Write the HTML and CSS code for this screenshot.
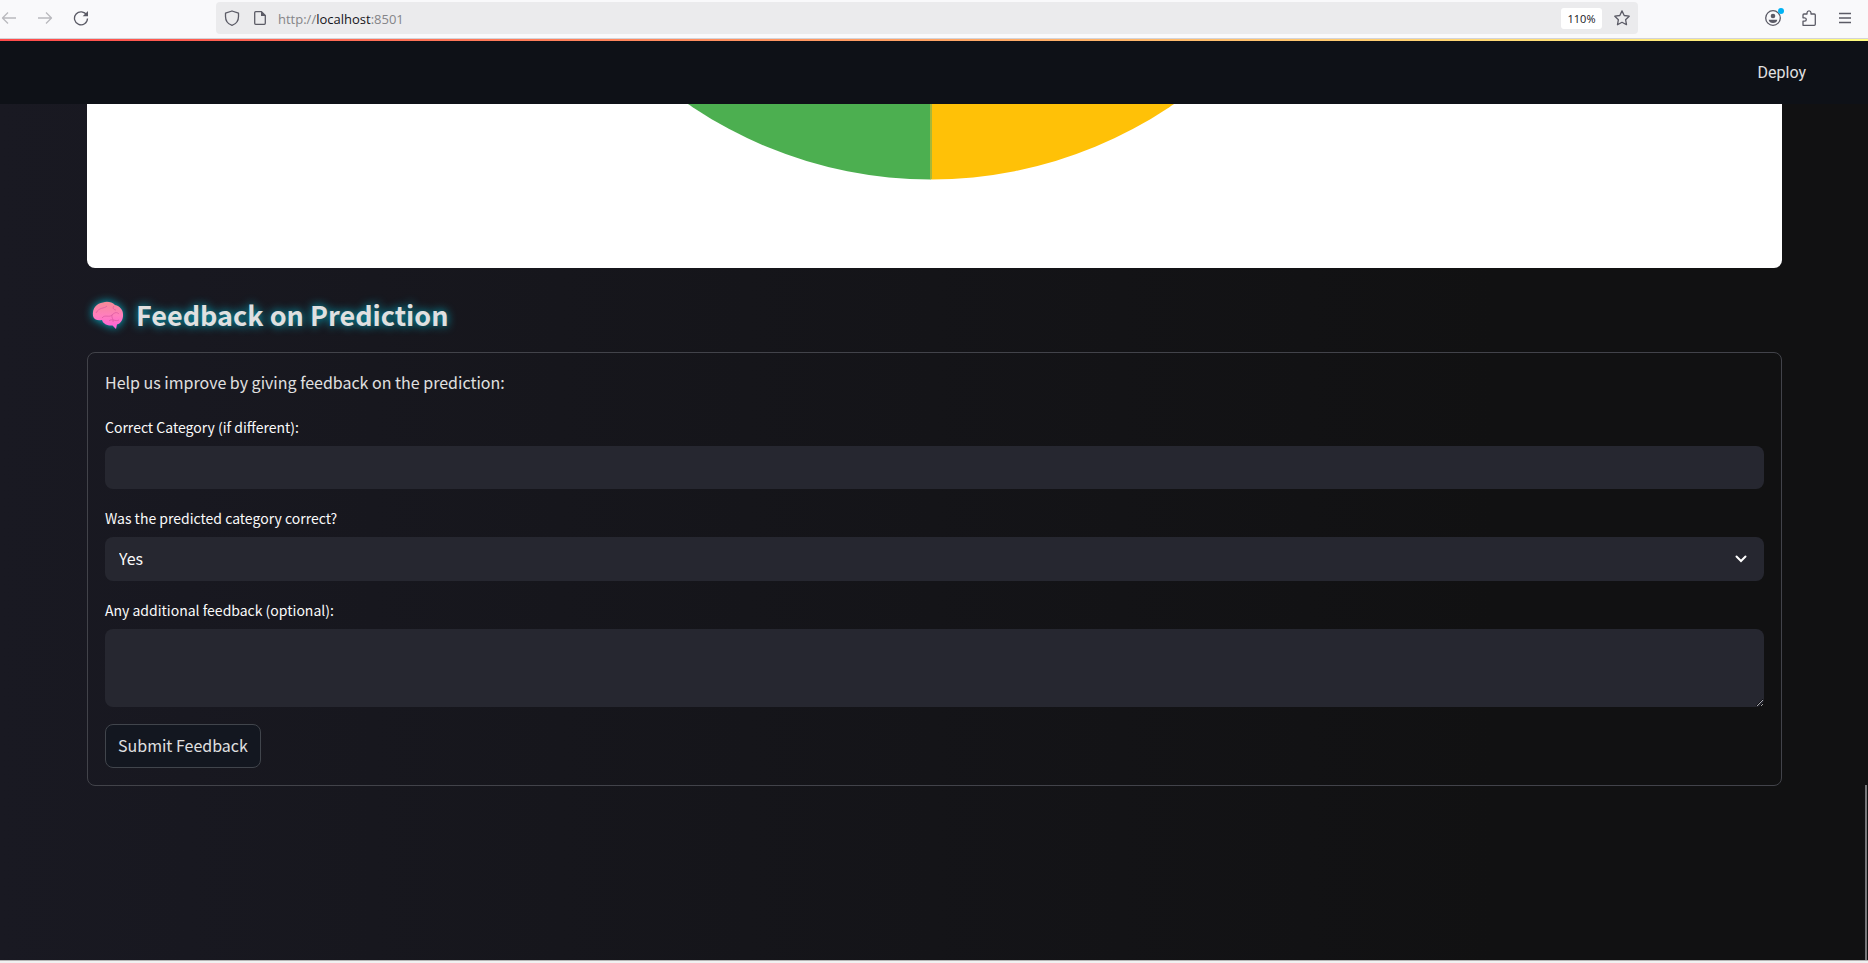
FILE: index.html
```html
<!DOCTYPE html>
<html lang="en">
<head>
<meta charset="utf-8">
<title>Feedback on Prediction</title>
<link rel="stylesheet" href="styles.css">
</head>
<body>
<div class="toolbar">
  <div class="nav">
    <button class="tool dim" aria-label="Back"><svg viewBox="0 0 16 16"><path d="M15 8H1.500M7 2.500L1.500 8 7 13.500"/></svg></button>
    <button class="tool dim" aria-label="Forward"><svg viewBox="0 0 16 16"><path d="M1 8H14.500M9 2.500L14.500 8 9 13.500"/></svg></button>
    <button class="tool" aria-label="Reload"><svg viewBox="0 0 16 16"><path d="M13.700 5.200A6.500 6.500 0 1 0 14.500 8.500"/><path class="solid" d="M15 1v5.300H9.700z"/></svg></button>
  </div>
  <div class="address">
    <svg class="icon" viewBox="0 0 16 16"><path d="M8 1L14.500 3.200V6.500C14.500 10.500 12 14 8 15.300C4 14 1.500 10.500 1.500 6.500V3.200Z"/></svg>
    <svg class="icon page" viewBox="0 0 16 16"><path d="M3.700 1.700H9.500L13.300 5.500V13.300Q13.300 14.300 12.300 14.300H3.700Q2.700 14.300 2.700 13.300V2.700Q2.700 1.700 3.700 1.700Z"/><path class="solid" d="M9 1.200V6h4.800z"/></svg>
    <span class="url">http://<span class="host">localhost</span>:8501</span>
    <button class="zoom">110%</button>
    <button class="tool" aria-label="Bookmark"><svg viewBox="0 0 16 16"><path d="M8 .9l2.200 4.600 5 .7-3.600 3.500.9 5L8 12.300l-4.500 2.400.9-5L.8 6.200l5-.7z"/></svg></button>
  </div>
  <div class="actions">
    <button class="tool account" aria-label="Account"><svg viewBox="0 0 16 16"><circle cx="8" cy="8" r="7.300"/><circle class="solid" cx="8" cy="6" r="2.300"/><path class="solid" d="M3.700 9.700h8.600q-.6 3.300-4.300 3.300t-4.300-3.300z"/></svg><span class="dot"></span></button>
    <button class="tool" aria-label="Extensions"><svg viewBox="0 0 16 16"><path d="M2 15.300V11.200h1.600q1.700-.1 1.700-1.700T3.600 7.800H2V5q0-1 1-1h3V2.800Q6.200.8 8 .8t2 2V4h3.300q1 0 1 1v9.300q0 1-1 1z"/></svg></button>
    <button class="tool" aria-label="Menu"><svg viewBox="0 0 16 16"><path d="M2 3.500h12M2 8h12M2 12.500h12"/></svg></button>
  </div>
</div>
<header class="app-header">
  <button class="deploy">Deploy</button>
</header>
<main class="content">
  <div class="chart">
    <svg viewBox="0 0 1695 164" preserveAspectRatio="xMidYMin meet" role="img" aria-label="Pie chart">
      <path fill="#4caf50" d="M844 -353.500V75.500A429 429 0 0 1 415 -353.500Z"/>
      <path fill="#ffc107" d="M844 -353.500V75.500A429 429 0 0 0 1273 -353.500Z"/>
      <path class="seam" d="M844 0V75"/>
    </svg>
  </div>
  <h2 class="title">
    <svg class="brain" viewBox="0 0 32 30">
      <defs><linearGradient id="pink" x1="0" y1="0" x2="0" y2="1"><stop offset="0" stop-color="#f58a96"/><stop offset=".5" stop-color="#ff7fbd"/><stop offset="1" stop-color="#ff5edb"/></linearGradient></defs>
      <path fill="url(#pink)" d="M1 16C0 8 5 3 11 2.500C15 1 20 2 23 5C28 6 31 10 31 14C31.500 19 29 23.500 25 24.500C24.500 26 24.500 27.500 24 29L20.500 25.500C16 26 11 24 10 20C6 21 2 20 1 16Z"/>
      <path class="fold" d="M4 13C7 7 12 9 15 6M10 18c3-4 7 0 10-3s5-3 7-1M17 21c3-3 6 1 10-1M22 6c-2 2 0 4 2 4M20 15c-1 3 2 4 1 7"/>
    </svg>
    <span>Feedback on Prediction</span>
  </h2>
  <form class="feedback" onsubmit="return false">
    <p class="intro">Help us improve by giving feedback on the prediction:</p>
    <div class="field">
      <label for="category">Correct Category (if different):</label>
      <input class="control" id="category" type="text">
    </div>
    <div class="field">
      <label for="correct">Was the predicted category correct?</label>
      <div class="select">
        <select class="control" id="correct"><option>Yes</option><option>No</option></select>
        <svg class="chevron" viewBox="0 0 12 8"><path d="M1.500 1.500L6 6l4.500-4.500"/></svg>
      </div>
    </div>
    <div class="field">
      <label for="extra">Any additional feedback (optional):</label>
      <textarea class="control area" id="extra"></textarea>
    </div>
    <button class="submit" type="submit">Submit Feedback</button>
  </form>
</main>
<div class="scroll-thumb"></div>
<div class="bottom-edge"></div>
</body>
</html>
```
FILE: styles.css
```css
* { box-sizing: border-box; }

body {
  margin: 0;
  min-height: 100vh;
  display: flex;
  flex-direction: column;
  background: linear-gradient(to right, #191922, #111112 80%);
  color: #e0e0e0;
  font-family: "Noto Sans CJK SC", "Noto Sans", sans-serif;
  font-size: 16px;
}

button, input, select, textarea { font: inherit; color: inherit; }

.toolbar {
  display: flex;
  align-items: center;
  height: 39px;
  padding: 2px 15px 4px 1px;
  background: #f9f9fb;
  border-bottom: 1px solid #d3d3d8;
  color: #5b5b66;
}

.nav { display: flex; gap: 20px; width: 215px; }
.actions { display: flex; justify-content: flex-end; gap: 20px; width: 215px; }

.tool {
  display: flex;
  position: relative;
  padding: 0;
  border: 0;
  background: none;
}

.tool svg, .icon {
  width: 16px;
  height: 16px;
  fill: none;
  stroke: currentColor;
  stroke-width: 1.3;
  stroke-linejoin: round;
}

.toolbar .solid { fill: currentColor; stroke: none; }
.toolbar .dim { color: #b9b9be; }

.address {
  flex: 1;
  display: flex;
  align-items: center;
  height: 32px;
  padding: 0 8px;
  border-radius: 4px;
  background: #ebebed;
}

.page { margin-left: 12px; }

.url {
  flex: 1;
  margin-left: 10px;
  padding-top: 2px;
  font-family: "Open Sans", sans-serif;
  font-size: 13px;
  line-height: 20px;
  color: #858588;
}

.host { color: #15141a; }

.zoom {
  width: 41px;
  height: 21px;
  margin-right: 12px;
  padding: 0;
  border: 0;
  border-radius: 3px;
  background: #fff;
  color: #15141a;
  font-family: "Open Sans", sans-serif;
  font-size: 11px;
}

.dot {
  position: absolute;
  top: -2px;
  right: -3px;
  width: 6px;
  height: 6px;
  border-radius: 50%;
  background: #00b3f4;
}

.app-header {
  display: flex;
  justify-content: flex-end;
  align-items: center;
  height: 65px;
  padding-right: 62px;
  border-top: 2px solid;
  border-image: linear-gradient(to right, #ff4b4b, #fffd80) 1;
  background: #0e1117;
}

.deploy {
  padding: 0;
  border: 0;
  background: none;
  font-family: Roboto, sans-serif;
  font-size: 16px;
}

.content { flex: 1; padding: 0 86px 0 87px; }

.chart {
  height: 164px;
  overflow: hidden;
  border-radius: 0 0 8px 8px;
  background: #fff;
}

.chart svg { display: block; width: 100%; height: 164px; }
.seam { stroke: #a6b83a; stroke-width: 2; }

.title {
  display: flex;
  align-items: center;
  gap: 12px;
  margin: 0;
  padding: 27px 5px 17px;
  font-size: 27px;
  font-weight: 700;
  line-height: 40px;
  text-shadow: 0 0 10px #00bcd4;
}

.brain {
  width: 32px;
  height: 30px;
  filter: drop-shadow(0 0 5px #00bcd4);
}

.fold { fill: none; stroke: #d957a0; stroke-width: 1; opacity: .7; }

.feedback {
  display: flex;
  flex-direction: column;
  align-items: flex-start;
  gap: 17px;
  padding: 17px;
  border: 1px solid #42434a;
  border-radius: 8px;
}

.intro { margin: 0 0 4px; line-height: 24px; }

.field {
  display: flex;
  flex-direction: column;
  align-self: stretch;
  gap: 6px;
  color: #fafafa;
}

.field label { font-size: 14px; line-height: 25px; }

.control {
  display: block;
  width: 100%;
  height: 43px;
  padding: 0 14px 2px;
  border: 0;
  border-radius: 8px;
  outline: 0;
  background: #262730;
}

.select { position: relative; }
.select .control { height: 44px; appearance: none; }

.chevron {
  position: absolute;
  top: 18px;
  right: 17px;
  width: 12px;
  height: 8px;
  fill: none;
  stroke: #fff;
  stroke-width: 2;
  stroke-linecap: round;
  pointer-events: none;
}

.area { height: 78px; padding: 12px 14px; resize: vertical; }

.submit {
  height: 44px;
  padding: 0 12px 2px;
  border: 1px solid #41454c;
  border-radius: 8px;
  background: #131720;
}

.scroll-thumb {
  position: fixed;
  right: 1px;
  bottom: 3px;
  width: 2px;
  height: 175px;
  background: #77777a;
}

.bottom-edge {
  height: 3px;
  border-top: 1px solid #b5b5b5;
  background: #f0f0f0;
}
```
